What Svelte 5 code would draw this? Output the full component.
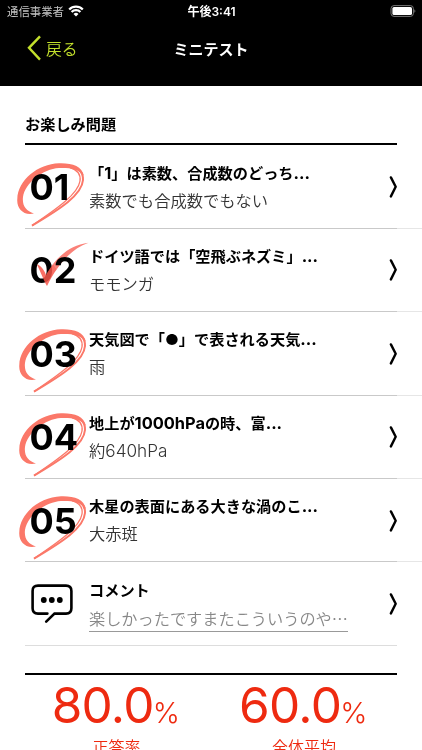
<script lang="ts">
	interface Question {
		no: string;
		title: string;
		answer: string;
		correct: boolean;
	}

	const questions: Question[] = [
		{ no: '01', title: '「1」は素数、合成数のどっち...', answer: '素数でも合成数でもない', correct: true },
		{ no: '02', title: 'ドイツ語では「空飛ぶネズミ」...', answer: 'モモンガ', correct: false },
		{ no: '03', title: '天気図で「●」で表される天気...', answer: '雨', correct: true },
		{ no: '04', title: '地上が1000hPaの時、富...', answer: '約640hPa', correct: true },
		{ no: '05', title: '木星の表面にある大きな渦のこ...', answer: '大赤斑', correct: true }
	];

	const scores = [
		{ value: '80.0', label: '正答率' },
		{ value: '60.0', label: '全体平均' }
	];

	// odd entries are the latin runs, which are set slightly larger than the kana
	const runs = (text: string) => text.split(/([0-9A-Za-z.]+)/);
</script>

{#snippet mixed(text: string)}{#each runs(text) as run, i}{#if i % 2}<span class="latin">{run}</span>{:else}{run}{/if}{/each}{/snippet}

{#snippet chevron()}
	<svg class="chevron" viewBox="0 0 8 22" aria-hidden="true">
		<path d="M1.9 1.4 L6.7 10.8 L1.9 20.4" />
	</svg>
{/snippet}

<div class="screen">
	<header>
		<div class="status">
			<div class="carrier">
				<span>通信事業者</span>
				<svg class="wifi" viewBox="0 0 16 12" aria-hidden="true">
					<path d="M1.2 4.5 A9.7 9.7 0 0 1 14.8 4.5" />
					<path d="M3.6 7 A6.2 6.2 0 0 1 12.4 7" />
					<path class="dot" d="M8 11.6 L5.5 9 A3.6 3.6 0 0 1 10.5 9 Z" />
				</svg>
			</div>
			<span class="time">午後3:41</span>
			<svg class="battery" viewBox="0 0 26 12" aria-hidden="true">
				<rect class="case" x="1" y="0.6" width="22.4" height="10.8" rx="3" />
				<rect class="charge" x="2.4" y="2" width="19.6" height="8" rx="1.6" />
				<path class="case-tip" d="M24.4 4.2 Q26.4 6 24.4 7.8 Z" />
			</svg>
		</div>
		<nav>
			<div class="back">
				<svg viewBox="0 0 14 26" aria-hidden="true"><path d="M13 1.4 L2 12.8 L13 24.6" /></svg>
				<span>戻る</span>
			</div>
			<h1>ミニテスト</h1>
			<span></span>
		</nav>
	</header>

	<main>
		<h2>お楽しみ問題</h2>
		<ul>
			{#each questions as q (q.no)}
				<li class="row">
					<div class="number" class:first={q.no === '01'}>
						<span>{q.no}</span>
						{#if q.correct}
							<svg class="circle" viewBox="0 0 68 64" aria-hidden="true">
								<path
									class="fill"
									d="M17 50.5 C6 53 -.5 45 .3 36 C.8 17 21 1 42 .3 C55 -.1 65 3 67 13 C62 6 53 4.6 42 5 C26 6 8 20 6 34 C5 43 9 48 17 50.5 Z"
								/>
								<path class="stroke" d="M50 2.4 C61 4 66.5 9 66 17 C65 32 43 46 15 62.6" />
								<path class="thin" d="M53 4.6 C61 7 64 11 63 18 C61 31 41 45 15 62.6" />
							</svg>
						{:else}
							<svg class="check" viewBox="0 0 54 46" aria-hidden="true">
								<path class="tick" d="M2 22.5 C5 23 9 27 11 33 C13 29 16 25 18 22 L22 27 C18 32 15 38 12 44 C9 39 6 31 2 22.5 Z" />
								<path class="tail" d="M18 22 C28 10 38 3 53.5 .8 C40 6 31 14 22 27 Z" />
							</svg>
						{/if}
					</div>
					<div class="text">
						<p class="title">{@render mixed(q.title)}</p>
						<p class="answer">{@render mixed(q.answer)}</p>
					</div>
					{@render chevron()}
				</li>
			{/each}
			<li class="row comment">
				<div class="number">
					<svg class="bubble" viewBox="0 0 42 40" aria-hidden="true">
						<path d="M16.4 29.6 H7 Q1.6 29.6 1.6 24.2 V7 Q1.6 1.6 7 1.6 H35 Q40.4 1.6 40.4 7 V24.2 Q40.4 29.6 35 29.6 H23.5 L15.2 37.6" />
						<circle cx="12.8" cy="16" r="2.9" />
						<circle cx="20.8" cy="16" r="2.9" />
						<circle cx="28.8" cy="16" r="2.9" />
					</svg>
				</div>
				<div class="text">
					<p class="title">コメント</p>
					<p class="answer">楽しかったですまたこういうのや…</p>
				</div>
				{@render chevron()}
			</li>
		</ul>

		<section class="scores">
			{#each scores as s}
				<div class="score">
					<p class="value">{s.value}<small>%</small></p>
					<p class="label">{s.label}</p>
				</div>
			{/each}
		</section>
	</main>
</div>

<style>
	:global(body) { background: #fff; overflow: hidden; }
	h1, h2, p, ul { margin: 0; padding: 0; font-weight: inherit; }
	ul { list-style: none; }
	svg { display: block; fill: none; flex: none; }

	.screen { height: 750px; overflow: hidden; color: #000; font-family: Inter, "Noto Sans CJK JP", sans-serif; }

	header { height: 86px; background: #000; color: #fff; }
	.status { display: grid; grid-template-columns: 1fr auto 1fr; align-items: center; height: 21px; padding: 0 6px 0 7px; font-size: 11.4px; }
	.carrier { display: flex; align-items: center; gap: 4px; color: #c4c4c4; }
	.wifi { width: 16px; height: 12px; stroke: #fff; stroke-width: 2.3; }
	.wifi .dot { fill: #fff; stroke: none; }
	.time { font-weight: 600; font-size: 12px; }
	.battery { width: 26px; height: 12px; justify-self: end; }
	.case { stroke: #777; stroke-width: 1; }
	.charge { fill: #fff; }
	.case-tip { fill: #777; }

	nav { display: grid; grid-template-columns: 1fr auto 1fr; align-items: center; height: 54px; padding: 0 27px; }
	.back { display: flex; align-items: center; gap: 5px; color: #c3e02c; font-size: 15.8px; font-weight: 350; }
	.back svg { width: 14px; height: 26px; stroke: #c3e02c; stroke-width: 2.4; }
	h1 { font-size: 15px; font-weight: 700; }

	main { padding-left: 25px; }
	h2 { box-sizing: border-box; width: 372px; height: 59px; padding-top: 26px; border-bottom: 2px solid #000; font-size: 15.2px; font-weight: 700; line-height: 26px; }

	ul { padding-top: 0.4px; }
	.row { display: flex; align-items: center; box-sizing: border-box; width: 397px; height: 83.4px; padding-right: 25px; background: linear-gradient(90deg, #c9c9c9 372px, #e6e6e6 372px) bottom / 100% 1px no-repeat; }
	.row.comment { background: linear-gradient(#ddd, #ddd) left bottom / 372px 1px no-repeat; }
	.number { position: relative; width: 64px; padding-left: 4.5px; box-sizing: border-box; font-size: 36px; font-weight: 700; line-height: 44px; }
	.circle { position: absolute; left: -6px; top: -2.5px; width: 68px; height: 64px; mix-blend-mode: multiply; }
	.first .circle { left: -8px; }
	.circle .fill { fill: #fb7869; }
	.circle .stroke { stroke: #fb7869; stroke-width: 2; }
	.circle .thin { stroke: #fb7869; stroke-width: 1.3; }
	.check { position: absolute; left: 10px; top: -6px; width: 54px; height: 46px; fill: #f8564a; }
	.check .tick { opacity: 0.85; }
	.check .tail { opacity: 0.75; mix-blend-mode: multiply; }
	.bubble { width: 42px; height: 40px; margin-left: 1px; stroke: #000; stroke-width: 2.6; stroke-linecap: round; }
	.bubble circle { fill: #000; stroke: none; }
	.text { flex: 1; white-space: nowrap; }
	.title { height: 27px; font-size: 15.2px; font-weight: 700; line-height: 27px; }
	.title .latin { font-size: 16.4px; line-height: 1; }
	.answer { width: max-content; height: 28px; color: #333; font-size: 16.3px; font-weight: 350; line-height: 28px; }
	.answer .latin { font-size: 17.2px; font-weight: 300; line-height: 1; }
	.comment .answer { box-sizing: border-box; border-bottom: 1px solid #999; color: #888; font-family: "Noto Sans CJK JP", sans-serif; font-size: 16.2px; }
	.chevron { width: 8px; height: 22px; stroke: #000; stroke-width: 2.4; stroke-linecap: round; stroke-linejoin: round; }

	.scores { display: grid; grid-template-columns: 183px 192px; width: 372px; margin-top: 27px; border-top: 2px solid #000; color: #ee2a10; text-align: center; }
	.value { height: 60px; padding-right: 3px; font-size: 49.5px; line-height: 61px; letter-spacing: -0.7px; }
	.value small { font-size: 29px; font-weight: 350; letter-spacing: -1.5px; margin-left: -1px; }
	.label { font-size: 16px; font-weight: 350; line-height: 24px; }
</style>
